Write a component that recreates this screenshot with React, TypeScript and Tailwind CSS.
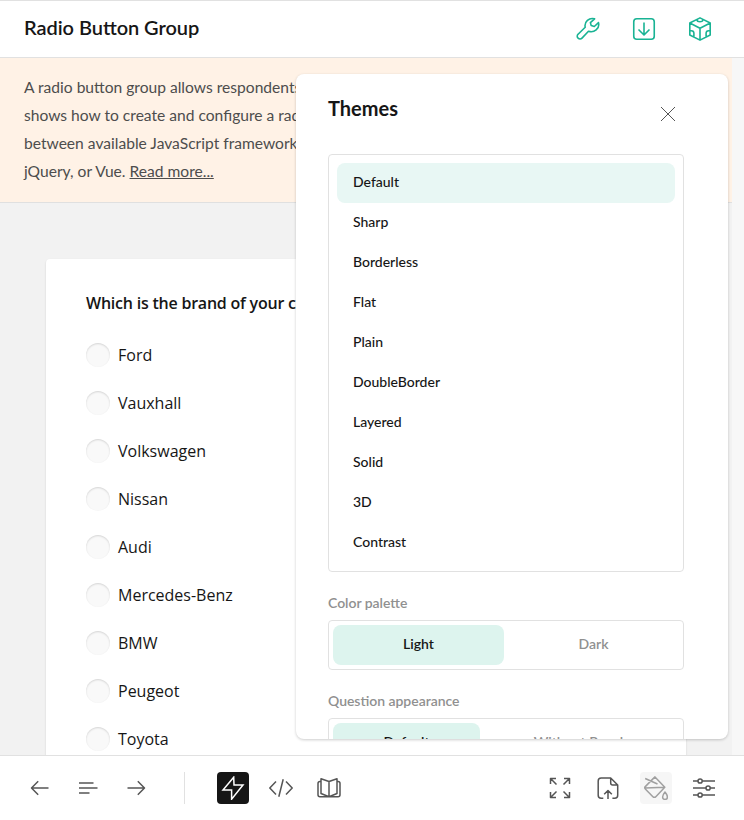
import React from "react";

const brands = ["Ford", "Vauxhall", "Volkswagen", "Nissan", "Audi", "Mercedes-Benz", "BMW", "Peugeot", "Toyota"];
const themes = ["Default", "Sharp", "Borderless", "Flat", "Plain", "DoubleBorder", "Layered", "Solid", "3D", "Contrast"];

function Icon({ children, w = 1.5 }: { children: React.ReactNode; w?: number }) {
  return (
    <svg width="24" height="24" viewBox="0 0 24 24" fill="none" stroke="currentColor" strokeWidth={w} strokeLinejoin="round" className="shrink-0">
      {children}
    </svg>
  );
}

function Tool({ children, tone = "" }: { children: React.ReactNode; tone?: string }) {
  return <button className={"flex h-8 w-8 items-center justify-center rounded " + tone}>{children}</button>;
}

function Header() {
  return (
    <header className="flex h-[58px] shrink-0 items-center justify-between border-y border-[#e1e1e1] bg-white pl-6 pr-8">
      <h1 className="-mt-1 text-[20px] font-semibold leading-7 tracking-[-0.05px] text-[#161616] [font-feature-settings:'liga','dlig']">Radio Button Group</h1>
      <div className="flex gap-8 text-[#19b394]">
        <Icon w={1.6}>
          <path d="M18.6 1.8C13.2.2 8 4.700 9.200 10.200L2.100 17.200a2.600 2.600 0 0 0 0 3.900 2.700 2.700 0 0 0 3.900 0l6.500-6.900c5.500 1.900 11.500-2.500 10-8.600l-4.200 3.900-3.100-.9-.8-3Z" />
        </Icon>
        <Icon w={1.6}>
          <rect x="1.75" y="1.75" width="20.5" height="20.5" rx="3" />
          <path d="M12 5.500v12.200M6.500 12.500l5.500 5.500 5.500-5.500" />
        </Icon>
        <Icon w={1.6}>
          <path d="M12 .9 22.200 6v12L12 23.100 1.800 18V6ZM1.800 6 12 11.200 22.200 6M12 11.200v11.900M9.200 2.600v.7c0 1.900 5.600 1.900 5.600 0v-.7M1.800 13.700h1.500c1.500 0 2.600 1.200 2.600 2.600V20M22.200 13.700h-1.500a2.600 2.600 0 0 0-2.600 2.600V20" />
        </Icon>
      </div>
    </header>
  );
}

function Survey() {
  return (
    <main className="relative min-h-0 flex-1 overflow-hidden bg-[#f7f7f7]">
      <div className="h-full w-[732px] bg-[#f2f2f2]">
        <div className="h-[145px] border-b border-[#e0e0e0] bg-[#fff2e6] pl-6 pt-[15px] text-[15.6px] leading-7 text-[#4d4d4d] [font-feature-settings:'liga','dlig']">
          <p className="whitespace-nowrap">A radio button group allows respondents to<br />shows how to create and configure a radio<br />between available JavaScript frameworks:<br />jQuery, or Vue. <span className="underline">Read more...</span></p>
        </div>
        <section className="ml-[46px] mt-14 h-[600px] w-[640px] rounded bg-white px-10 pt-8 font-['Open_Sans',sans-serif] text-[16px] leading-6 text-[#161616] shadow-[0_1px_2px_rgba(0,0,0,0.15)]">
          <h2 className="mb-4 font-semibold tracking-[-0.22px]">Which is the brand of your car?</h2>
          {brands.map((b) => (
            <label key={b} className="flex h-12 items-center gap-2">
              <span className="h-6 w-6 rounded-full bg-[#f9f9f9] shadow-[inset_0_1px_2px_rgba(0,0,0,0.15)]" />
              <span>{b}</span>
            </label>
          ))}
        </section>
      </div>
      <ThemePanel />
    </main>
  );
}

function Choices({ items, width }: { items: string[]; width: string }) {
  return (
    <div className="mt-[6px] flex h-[50px] rounded border border-[#e1e1e1] p-1 text-center font-semibold leading-[38px]">
      <div className={"rounded-lg bg-[#ddf4ee] text-[#161616] " + width}>{items[0]}</div>
      <div className="flex-1 pl-1 text-[#909090]">{items[1]}</div>
    </div>
  );
}

function ThemePanel() {
  return (
    <aside className="absolute left-[296px] top-4 h-[665px] w-[432px] overflow-hidden rounded-lg bg-white px-8 text-[14px] shadow-[0_1px_3px_rgba(0,0,0,0.2)]">
      <div className="flex h-20 justify-between pr-3">
        <h2 className="mt-5 text-[20px] font-bold leading-7 text-[#161616]">Themes</h2>
        <svg width="24" height="24" viewBox="0 0 24 24" className="mr-1 mt-7" stroke="#555" fill="none"><path d="m5 5 14 14M19 5 5 19" /></svg>
      </div>
      <div className="mr-3 h-[418px] rounded border border-[#e1e1e1] p-2">
        {themes.map((t, i) => (
          <div key={t} className={"h-10 rounded-lg px-4 leading-[38px] font-medium text-[#161616] " + (i ? "" : "bg-[#e8f7f4]")}>{t}</div>
        ))}
      </div>
      <div className="mr-3 mt-5 leading-[22px] text-[#909090] [font-feature-settings:'liga','dlig']"><span className="font-semibold tracking-[-0.03px]">Color palette</span><Choices items={["Light", "Dark"]} width="w-[171px]" /></div>
      <div className="mr-3 mt-5 leading-[22px] text-[#909090] [font-feature-settings:'liga','dlig']"><span className="font-semibold tracking-[-0.03px]">Question appearance</span><Choices items={["Default", "Without Panels"]} width="w-[147px]" /></div>
    </aside>
  );
}

function Toolbar() {
  return (
    <footer className="flex h-[65px] shrink-0 items-center justify-between border-t border-[#e1e1e1] bg-white px-6 text-[#555]">
      <div className="flex items-center gap-4">
        <Tool><Icon><path d="M20.5 12h-17M10.2 5.3 3.500 12l6.700 6.700" /></Icon></Tool>
        <Tool><Icon><path d="M3 7h14.5M3 12h18.5M3 17h10.5" /></Icon></Tool>
        <Tool><Icon><path d="M3.5 12h17M13.8 5.300l6.700 6.700-6.700 6.700" /></Icon></Tool>
        <div className="mx-4 h-8 w-px bg-[#e1e1e1]" />
        <Tool tone="bg-[#161616] text-white"><Icon><path d="M12.7 1.2 2 14h8.6v9.2L22 8.900h-9Z" strokeLinejoin="miter" /></Icon></Tool>
        <Tool><Icon><path d="M7 5.5.8 12 7 18.5M17 5.5l6.200 6.500-6.200 6.500M14.2 3.3 9.800 20.7" /></Icon></Tool>
        <Tool><Icon><path d="M12 5.5 4 2.800v14.7l8 3.300 8-3.300V2.800Zm0 0v15.3M4 5.500H3a2 2 0 0 0-2 2v11.3a2 2 0 0 0 2 2h18a2 2 0 0 0 2-2V7.500a2 2 0 0 0-2-2h-1" /></Icon></Tool>
      </div>
      <div className="flex gap-4">
        <Tool><Icon><path d="M8.5 8.500 2.800 2.800M2.500 8V2.500H8M15.500 8.500l5.700-5.700M16 2.500h5.500V8M8.500 15.500l-5.700 5.700M2.500 16v5.500H8M15.500 15.500l5.700 5.700M21.500 16v5.500H16" /></Icon></Tool>
        <Tool><Icon><path d="M7.3 22.200H5.200a3 3 0 0 1-3-3V5a3 3 0 0 1 3-3h9.500l7 7v10.200a3 3 0 0 1-3 3h-2.300M14.700 2v5a2 2 0 0 0 2 2h5M12 23v-8.200M8.200 18.300l3.800-3.800 3.800 3.800" /></Icon></Tool>
        <Tool tone="bg-[#f6f6f6] text-[#a0a0a0]"><Icon><path d="M7.400 4.400 11 .9l9.800 10.400-9 9.400a2 2 0 0 1-2.900 0L1.300 13a1.700 1.700 0 0 1 0-2.400l6.100-6.200M1 12.100l19.600-.8M1.200 2.500 13.500 8M21 16s2.400 3 2.400 5a2.400 2.400 0 0 1-4.800 0c0-2 2.400-5 2.400-5Z" /></Icon></Tool>
        <Tool><Icon><path d="M1 5h5M10.200 5H23M1 12h13M18.200 12H23M1 19h5M10.200 19H23" /><circle cx="8.1" cy="5" r="2.1" /><circle cx="16.1" cy="12" r="2.1" /><circle cx="8.1" cy="19" r="2.1" /></Icon></Tool>
      </div>
    </footer>
  );
}

export default function App() {
  return (
    <div className="flex h-[820px] w-[744px] flex-col overflow-hidden bg-white font-[Lato,sans-serif]">
      <Header />
      <Survey />
      <Toolbar />
    </div>
  );
}
